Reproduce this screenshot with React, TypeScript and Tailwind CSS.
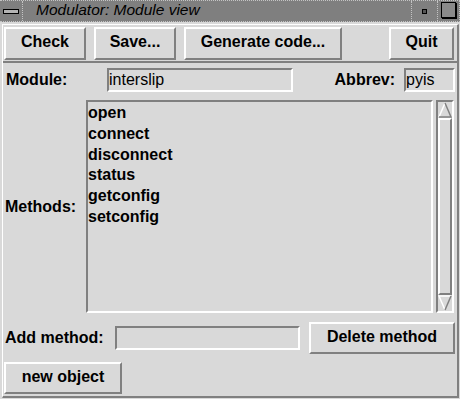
import React from "react";

const raised =
  "border-2 border-t-white border-l-white border-r-[#808080] border-b-[#808080]";
const sunken =
  "border-2 border-t-[#808080] border-l-[#808080] border-r-white border-b-white";

function Button({ label, className }: { label: string; className: string }) {
  return (
    <div
      className={`${raised} ${className} flex items-center justify-center pb-[3px] text-[16px] font-bold text-black`}
    >
      {label}
    </div>
  );
}

function Entry({ value, className }: { value: string; className: string }) {
  return (
    <div
      className={`${sunken} ${className} flex items-center overflow-hidden pb-[1px] text-[16px] text-black`}
    >
      {value}
    </div>
  );
}

function Scrollbar() {
  return (
    <div className={`${sunken} ml-[3px] flex h-[213px] w-[18px] flex-col`}>
      <svg width="14" height="16" viewBox="0 0 14 16">
        <polygon points="7,1 13,15 1,15" fill="#d9d9d9" />
        <path d="M1 15 L7 1" stroke="#fff" strokeWidth="1.5" fill="none" />
        <path d="M7 1 L13 15 L1 15" stroke="#808080" strokeWidth="1.5" fill="none" />
      </svg>
      <div className={`${raised} flex-1`} />
      <svg width="14" height="16" viewBox="0 0 14 16">
        <polygon points="1,1 13,1 7,15" fill="#d9d9d9" />
        <path d="M7 15 L1 1 L13 1" stroke="#fff" strokeWidth="1.5" fill="none" />
        <path d="M13 1 L7 15" stroke="#808080" strokeWidth="1.5" fill="none" />
      </svg>
    </div>
  );
}

const methods = ["open", "connect", "disconnect", "status", "getconfig", "setconfig"];

export default function App() {
  return (
    <div className="flex h-[399px] w-[460px] flex-col bg-[#d9d9d9] font-['Liberation_Sans',Arial,sans-serif] text-black">
      {/* title bar */}
      <div className="flex h-[22px] border-y border-r border-dotted border-[#c4c4c4] bg-[#7f7f7f]">
        <div className="flex w-[23px] items-center justify-center border-r border-dotted border-[#c4c4c4]">
          <div className="h-[5px] w-[16px] border border-black bg-[#b4b4b4]" />
        </div>
        <div className="flex-1 pl-[13px] text-[15.5px] italic leading-[18px]">
          Modulator: Module view
        </div>
        <div className="flex w-[26px] items-center justify-center border-l border-dotted border-[#c4c4c4]">
          <div className="h-[5px] w-[5px] border border-black bg-[#555]" />
        </div>
        <div className="flex w-[22px] items-start justify-center border-l border-dotted border-[#c4c4c4] pt-[1px]">
          <div className="h-[16px] w-[15px] border border-black bg-[#8a8a8a] shadow-[1px_1px_0_#000]" />
        </div>
      </div>

      {/* body */}
      <div className="flex flex-1 flex-col pb-[1px] pl-[2px] pr-[1px] pt-[2px]">
        <div className="flex flex-1 flex-col border-b-2 border-l border-r-2 border-t border-b-[#808080] border-l-white border-r-[#808080] border-t-white">
          {/* button row */}
          <div className="flex border-b-2 border-[#808080] pb-[1px] pl-[1px] pr-[3px] pt-[2px]">
            <Button label="Check" className="h-[33px] w-[82px]" />
            <Button label="Save..." className="ml-[8px] h-[33px] w-[82px]" />
            <Button label="Generate code..." className="ml-[8px] h-[33px] w-[158px]" />
            <Button label="Quit" className="ml-auto h-[33px] w-[65px]" />
          </div>

          {/* module row */}
          <div className="flex items-center pl-[3px] pr-[2px] pt-[5px]">
            <div className="w-[101px] text-[16px] font-bold">Module:</div>
            <Entry value="interslip" className="h-[24px] w-[186px]" />
            <div className="ml-auto mr-[9px] text-[16px] font-bold">Abbrev:</div>
            <Entry value="pyis" className="h-[24px] w-[51px]" />
          </div>

          {/* methods */}
          <div className="mt-[8px] flex items-center pl-[2px]">
            <div className="w-[81px] text-[16px] font-bold">Methods:</div>
            <div className={`${sunken} h-[213px] w-[347px] overflow-hidden`}>
              <div className="pt-[1px] text-[16px] font-bold leading-[20.8px]">
                {methods.map((m) => (
                  <div key={m}>{m}</div>
                ))}
              </div>
            </div>
            <Scrollbar />
          </div>

          {/* add method */}
          <div className="mt-[9px] flex h-[32px] items-center pl-[2px]">
            <div className="w-[110px] text-[16px] font-bold">Add method:</div>
            <Entry value="" className="h-[24px] w-[185px]" />
            <Button label="Delete method" className="ml-[9px] h-[32px] w-[146px]" />
          </div>

          <div className="mt-[8px] flex pl-[1px]">
            <Button label="new object" className="h-[32px] w-[118px]" />
          </div>
        </div>
      </div>
    </div>
  );
}
